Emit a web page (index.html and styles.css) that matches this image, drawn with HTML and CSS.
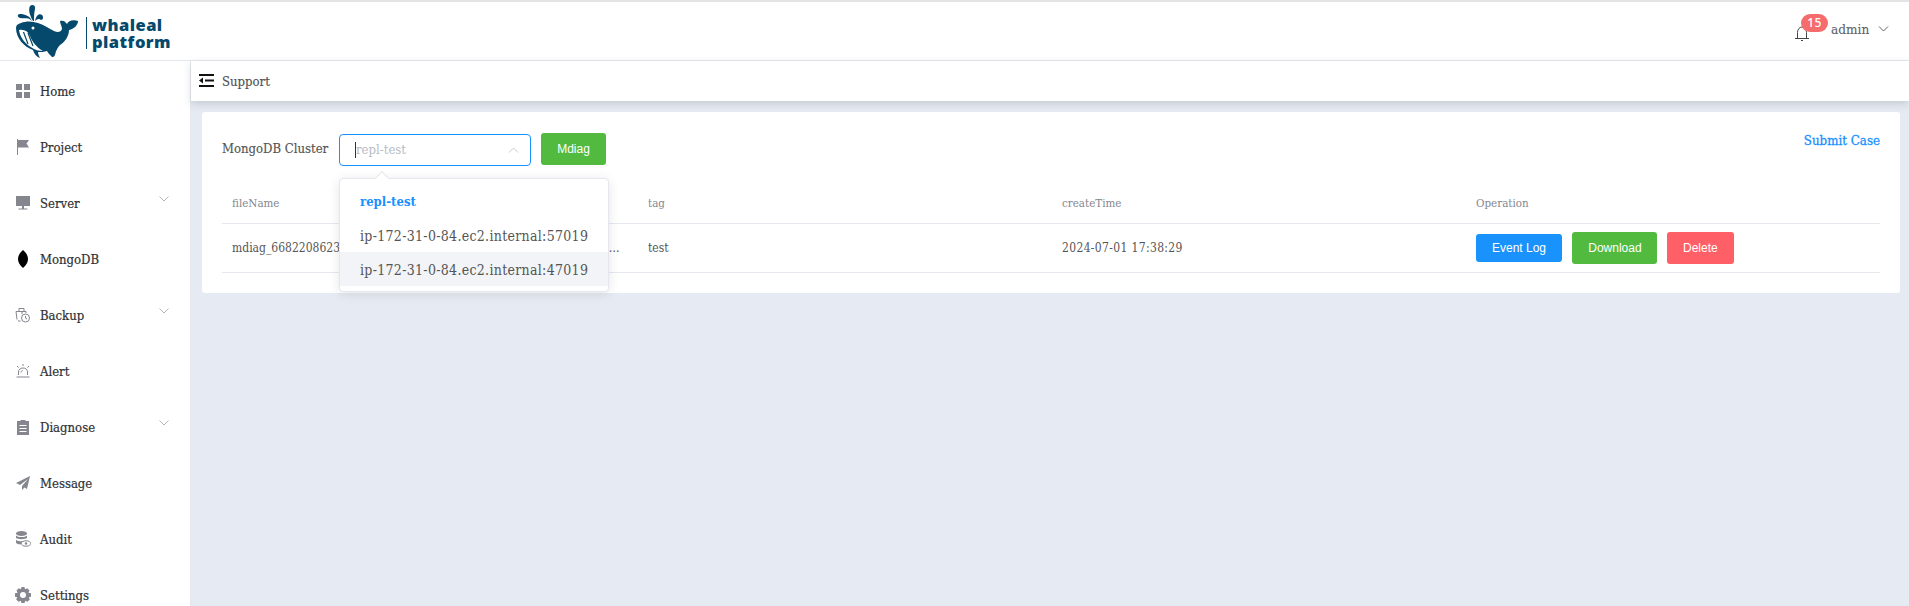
FILE: index.html
```html
<!DOCTYPE html>
<html lang="en">
<head>
<meta charset="utf-8">
<title>Support</title>
<link rel="stylesheet" href="styles.css">
</head>
<body>
<header class="topbar">
  <div class="logo">
    <svg class="whale" viewBox="0 0 64 54" width="64" height="54" aria-hidden="true">
      <path class="ink" d="M1 24C1 21 3 20 6 19C11 17 17 17 23 19C29 21 35 25 39 27C43 29 46 28 47 25C47 22 45 20 45 17C48 16 50 17 52 20C53 17 58 15 63 17C63 21 59 25 54 26C54 32 50 38 45 41C43 43 41 46 40 51C39 53 38 53 37 53C35 51 33 49 32 47C29 48 26 48 23 48C23 50 24 52 25 54C22 53 19 50 18 46C9 43 1 34 1 24Z"/>
      <path class="cut" d="M4 26C9 25 13 27 15 32C17 37 21 43 28 47C24 47 21 46 19 45C11 41 5 34 4 26Z"/>
      <path class="stroke" d="M8.500 28L13 40M13 29L18 42"/>
      <circle class="cut" cx="18" cy="24" r="1.500"/>
      <path class="ink" d="M17 17C14 13 9 15 5 14C2 13 2 10 5 10C10 10 15 12 17 17ZM18 17C15 12 13 6 15 2C17 0 21 1 20 5C19 9 19 13 19 17ZM20 17C21 12 24 9 27 11C29 13 28 16 26 16C24 14 22 15 20 17Z"/>
    </svg>
    <span class="logo-rule"></span>
    <span class="logo-text">whaleal<br>platform</span>
  </div>
  <div class="user">
    <span class="bell">
      <svg viewBox="0 0 14 18" width="14" height="18" aria-hidden="true">
        <path class="bell-line" d="M2.500 14V8.500C2.500 5.500 4.500 3 7 3C9.500 3 11.500 5.500 11.500 8.500V14M0 14.500H14M6 16.500H8"/>
      </svg>
      <span class="badge">15</span>
    </span>
    <span class="user-name">admin</span>
    <svg class="chev" viewBox="0 0 10 6" width="11" height="6" aria-hidden="true"><path d="M0.500 0.500L5 5L9.500 0.500"/></svg>
  </div>
</header>
<div class="shell">
  <nav class="sidebar">
    <a class="nav-item"><svg class="ico" viewBox="0 0 14 14"><path d="M0 0H6V6H0ZM8 0H14V6H8ZM0 8H6V14H0ZM8 8H14V14H8Z"/></svg><span>Home</span></a>
    <a class="nav-item"><svg class="ico" viewBox="0 0 14 16"><path d="M1 0H2V16H1ZM2 1H13L10.500 4.500L13 8.500H2Z"/></svg><span>Project</span></a>
    <a class="nav-item has-sub"><svg class="ico" viewBox="0 0 14 14"><path d="M0 0H14V10H0ZM6 10H8V12.500H6ZM2.500 12.500H11.500V13.500H2.500Z"/></svg><span>Server</span><svg class="sub-chev" viewBox="0 0 10 6"><path d="M0.500 0.500L5 5L9.500 0.500"/></svg></a>
    <a class="nav-item"><svg class="ico ico-tall" viewBox="0 0 14 18"><path class="black" d="M7 0C10.500 3 12 6 12 9C12 12 10.500 15 7 18C3.500 15 2 12 2 9C2 6 3.500 3 7 0Z"/></svg><span>MongoDB</span></a>
    <a class="nav-item has-sub"><svg class="ico ico-wide" viewBox="0 0 16 16"><path class="line" d="M2 12.500L1 4.500H6M4 4.500V1.500H9V4.500M6 4.500H11V6M3 14H5.500M7 7V4.500"/><circle class="line" cx="10.500" cy="11" r="4"/><path class="line" d="M10.500 9V11.200L12 12"/></svg><span>Backup</span><svg class="sub-chev" viewBox="0 0 10 6"><path d="M0.500 0.500L5 5L9.500 0.500"/></svg></a>
    <a class="nav-item"><svg class="ico" viewBox="0 0 14 14"><path class="line" d="M2.500 11V8C2.500 5.500 4.500 4 7 4C9.500 4 11.500 5.500 11.500 8V11M0.500 13H13.500M7 0V2M1 2L2.500 3.500M13 2L11.500 3.500"/><path class="line" d="M7 6.500C6 6.500 5 7.200 5 8.500"/></svg><span>Alert</span></a>
    <a class="nav-item has-sub"><svg class="ico" viewBox="0 0 14 16"><path d="M1 2H4.500V1H9.500V2H13V16H1ZM3.500 6V7H10.500V6ZM3.500 9V10H10.500V9ZM3.500 12V13H10.500V12Z"/></svg><span>Diagnose</span><svg class="sub-chev" viewBox="0 0 10 6"><path d="M0.500 0.500L5 5L9.500 0.500"/></svg></a>
    <a class="nav-item"><svg class="ico" viewBox="0 0 14 14"><path d="M14 0L0 7L4 9L12 3L6 10V14L8.500 11.500L11 13Z"/></svg><span>Message</span></a>
    <a class="nav-item"><svg class="ico ico-wide" viewBox="0 0 16 16"><ellipse cx="6.500" cy="2.500" rx="5.500" ry="2.500"/><path d="M1 4.500C3 6.500 10 6.500 12 4.500V7C10 8.500 3 8.500 1 7ZM1 9C3 10.500 7 10.500 9 10C7 11 6 12 5.500 13.500C3 13.200 1 12.500 1 11.500Z"/><ellipse class="line" cx="11" cy="12.500" rx="4.500" ry="2.700"/><circle cx="11" cy="12.500" r="1.200"/></svg><span>Audit</span></a>
    <a class="nav-item"><svg class="ico ico-wide" viewBox="0 0 16 16"><path fill-rule="evenodd" d="M6.500 0H9.500L10 2.200L12.200 1.200L14.500 3.500L13.400 5.700L16 6.300V9.700L13.800 10.200L14.800 12.400L12.400 14.800L10.200 13.800L9.500 16H6.500L5.800 13.800L3.600 14.800L1.200 12.400L2.200 10.200L0 9.700V6.300L2.600 5.700L1.500 3.500L3.800 1.200L6 2.200ZM8 5A3 3 0 1 0 8 11A3 3 0 1 0 8 5Z"/></svg><span>Settings</span></a>
  </nav>
  <main class="content">
    <div class="crumbbar">
      <svg class="fold" viewBox="0 0 15 13" width="15" height="13" aria-hidden="true"><path d="M0 0H15V2H0ZM6 5.500H15V7.500H6ZM0 11H15V13H0ZM4 3.500V9.500L0 6.500Z"/></svg>
      <span class="crumb">Support</span>
    </div>
    <section class="card">
      <a class="submit-link">Submit Case</a>
      <div class="toolbar">
        <span class="field-label">MongoDB Cluster</span>
        <div class="select">
          <span class="caret"></span><span class="placeholder">repl-test</span>
          <svg class="select-chev" viewBox="0 0 10 6" width="11" height="6" aria-hidden="true"><path d="M0.500 5.500L5 1L9.500 5.500"/></svg>
          <div class="dropdown">
            <span class="drop-arrow"></span>
            <div class="opt opt-selected">repl-test</div>
            <div class="opt">ip-172-31-0-84.ec2.internal:57019</div>
            <div class="opt opt-hover">ip-172-31-0-84.ec2.internal:47019</div>
          </div>
        </div>
        <button class="btn btn-green btn-mdiag">Mdiag</button>
      </div>
      <table class="grid">
        <thead>
          <tr><th>fileName</th><th>tag</th><th>createTime</th><th>Operation</th></tr>
        </thead>
        <tbody>
          <tr>
            <td><div class="ellipsis">mdiag_66822086230f8a4b1c2d3e4f5a6b7c8d_ip-172-31-0-84.ec2.internal_57019_replset_test.tar.gz</div></td>
            <td>test</td>
            <td class="date">2024-07-01 17:38:29</td>
            <td class="ops">
              <button class="btn btn-blue btn-small">Event Log</button>
              <button class="btn btn-green">Download</button>
              <button class="btn btn-red">Delete</button>
            </td>
          </tr>
        </tbody>
      </table>
    </section>
  </main>
</div>
</body>
</html>
```

FILE: styles.css
```css
* { box-sizing: border-box; }
html, body { margin: 0; height: 606px; overflow: hidden; }
body { font-family: "DejaVu Serif Condensed", "DejaVu Serif", serif; font-size: 13px; color: #303133; background: #fff; }

.topbar { height: 61px; border-top: 2px solid #e4e4e4; border-bottom: 1px solid #e4e8ec; display: flex; align-items: center; justify-content: space-between; padding: 0 20px 0 15px; background: #fff; }
.logo { display: flex; align-items: center; height: 54px; }
.whale { display: block; flex: none; overflow: visible; }
.ink { fill: #05496c; }
.cut { fill: #fff; }
.stroke { stroke: #05496c; stroke-width: 1.2; fill: none; }
.logo-rule { width: 1px; height: 32px; background: #05496c; margin: 4px 5px 0 7px; }
.logo-text { font: 800 16.500px/17px "Open Sans", sans-serif; color: #05496c; letter-spacing: .45px; margin-top: 4px; }

.user { display: flex; align-items: center; color: #606266; margin-top: -4px; }
.bell { position: relative; width: 14px; height: 18px; margin: 8px 22px 0 0; }
.bell svg { display: block; }
.bell-line { fill: none; stroke: #303133; stroke-width: .9; }
.badge { position: absolute; left: 6px; top: -10px; width: 27px; height: 18px; border-radius: 9px; background: #f56c6c; color: #fff; font: 500 12px/18px "Noto Sans", sans-serif; text-align: center; letter-spacing: .5px; }
.user-name { font-size: 13.500px; width: 47px; -webkit-text-stroke: .1px #606266; }
.chev { fill: none; stroke: #606266; stroke-width: 1; display: block; }

.shell { display: flex; height: 545px; }
.sidebar { width: 191px; flex: none; border-right: 1px solid #e4e8ec; background: #fff; overflow: hidden; padding-top: 2px; }
.nav-item { display: flex; align-items: center; height: 56px; padding: 0 0 0 16px; font-size: 13px; color: #303133; position: relative; flex: none; -webkit-text-stroke: .2px #303133; }
.nav-item span { margin-left: 10px; }
.ico { width: 14px; height: 16px; flex: none; fill: #85868e; overflow: visible; }
.ico-tall { height: 18px; }
.ico-wide { width: 16px; margin: 0 -1px; }
.ico .black { fill: #000; }
.ico .line { fill: none; stroke: #85868e; stroke-width: 1; }
.sub-chev { position: absolute; right: 21px; top: 21px; width: 10px; height: 6px; fill: none; stroke: #a0a4ab; stroke-width: .8; }

.content { flex: 1; min-width: 0; background: #e6eaf2; }
.crumbbar { height: 40px; background: #fff; display: flex; align-items: center; padding-left: 8px; box-shadow: 0 3px 8px rgba(60,70,80,.18); position: relative; }
.fold { fill: #111; margin-top: -1px; }
.crumb { margin-left: 8px; font-size: 13px; color: #505256; -webkit-text-stroke: .15px #505256; }

.card { position: relative; margin: 11px 9px 0 11px; height: 181px; background: #fff; border-radius: 3px; padding: 0 20px; }
.submit-link { position: absolute; right: 20px; top: 21px; color: #1890ff; font-size: 13.200px; -webkit-text-stroke: .3px #1890ff; }
.toolbar { display: flex; align-items: flex-start; padding-top: 21px; height: 72px; }
.field-label { font-size: 13px; color: #555; width: 117px; line-height: 31px; -webkit-text-stroke: .15px #555; }
.select { position: relative; width: 192px; height: 32px; margin-top: 1px; border: 1px solid #1890ff; border-radius: 4px; background: #fff; display: flex; align-items: center; padding-left: 15px; }
.caret { width: 1px; height: 16px; background: #333; flex: none; }
.placeholder { color: #b8bcc5; font-size: 13px; margin-top: -1px; }
.select-chev { position: absolute; right: 11px; top: 12px; fill: none; stroke: #c0c4cc; stroke-width: .9; }
.dropdown { position: absolute; left: -1px; top: 43px; width: 270px; height: 114px; padding: 5px 0; background: #fff; border: 1px solid #e4e7ed; border-radius: 4px; box-shadow: 0 2px 12px rgba(0,0,0,.1); z-index: 5; }
.drop-arrow { position: absolute; left: 37px; top: -6px; width: 10px; height: 10px; background: #fff; border-left: 1px solid #e4e7ed; border-top: 1px solid #e4e7ed; transform: rotate(45deg); }
.opt { position: relative; height: 34px; line-height: 36px; padding: 0 20px; font-size: 14px; color: #555; white-space: nowrap; letter-spacing: .3px; }
.opt-selected { color: #1890ff; font-weight: 700; font-size: 13px; letter-spacing: 0; }
.opt-hover { background: #f2f4f8; }

.btn { border: 0; border-radius: 3px; color: #fff; font: 12px "Liberation Sans", Arial, sans-serif; height: 32px; padding: 0; }
.btn-mdiag { width: 65px; margin-left: 10px; }
.btn-green { background: #52ba3e; }
.btn-blue { background: #1a92fb; }
.btn-red { background: #ff5f66; }
.btn-small { height: 28px; width: 86px; }
.ops .btn-green { width: 85px; margin-left: 7px; }
.ops .btn-red { width: 67px; margin-left: 6px; }

.grid { width: 1658px; border-collapse: collapse; table-layout: fixed; font-size: 12px; }
.grid th { height: 39px; text-align: left; font-weight: 400; color: #85868e; padding: 0 10px; border-bottom: 1px solid #e6e8f0; font-size: 11.500px; }
.grid td { height: 49px; padding: 0 10px; color: #555; border-bottom: 1px solid #e6e8f0; }
.grid th:first-child, .grid td:first-child { width: 416px; }
.ellipsis { width: 390px; overflow: hidden; white-space: nowrap; text-overflow: ellipsis; }
.date { letter-spacing: .35px; }
.ops { white-space: nowrap; }
```
